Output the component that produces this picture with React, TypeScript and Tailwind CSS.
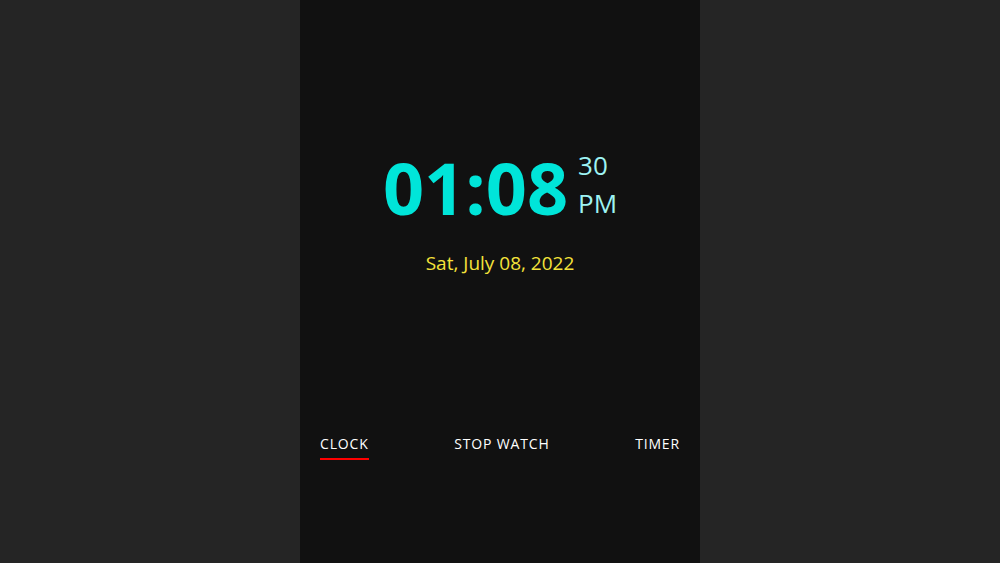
export default function App() {
  return (
    <div className="flex h-[563px] w-full justify-center bg-[#252525] font-['Open_Sans',sans-serif]">
      <div className="flex h-full w-[400px] flex-col items-center bg-[#111111] px-5">
        <div className="mt-[142px] flex items-start">
          <span className="text-[72px] font-bold leading-[90px] text-[#00e5d9]">01:08</span>
          <div className="ml-[10px] mt-[4px] flex flex-col text-[26px] leading-[38px] text-[#9ef3f3]">
            <span>30</span>
            <span>PM</span>
          </div>
        </div>
        <div className="mt-[17px] text-[19px] text-[#f4e23a]">Sat, July 08, 2022</div>
        <nav className="mt-[154px] flex w-full justify-between text-[14px] tracking-[0.06em] text-white">
          <div className="flex flex-col">
            <span className="leading-[24px]">CLOCK</span>
            <span className="mt-[2px] h-[2px] w-full bg-[#ff0000]" />
          </div>
          <span className="leading-[24px]">STOP WATCH</span>
          <span className="leading-[24px]">TIMER</span>
        </nav>
      </div>
    </div>
  );
}
